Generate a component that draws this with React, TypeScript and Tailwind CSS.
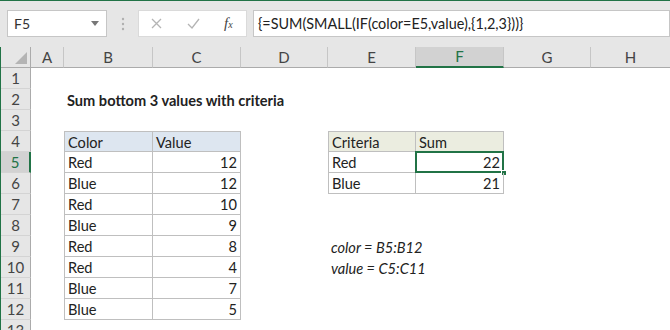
import React from "react";

type Cell = {
  text?: string;
  right?: boolean;
  bold?: boolean;
  italic?: boolean;
  cls?: string;
  selected?: boolean;
};

const t1 = "border-r border-b border-[#bfbfbf]";
const blueHdr = "bg-[#dde6f0]";
const greenHdr = "bg-[#ebede0]";

// row number -> cells keyed by column letter
const sheet: Record<number, Record<string, Cell>> = {
  2: { B: { text: "Sum bottom 3 values with criteria", bold: true } },
  4: {
    B: { text: "Color", cls: `${t1} border-l border-t ${blueHdr}` },
    C: { text: "Value", cls: `${t1} border-t ${blueHdr}` },
    E: { text: "Criteria", cls: `${t1} border-l border-t ${greenHdr}` },
    F: { text: "Sum", cls: `${t1} border-t ${greenHdr}` },
  },
  5: {
    E: { text: "Red", cls: `${t1} border-l` },
    F: { text: "22", right: true, cls: t1, selected: true },
  },
  6: {
    E: { text: "Blue", cls: `${t1} border-l` },
    F: { text: "21", right: true, cls: t1 },
  },
  9: { E: { text: "color = B5:B12", italic: true } },
  10: { E: { text: "value = C5:C11", italic: true } },
};

const data: [string, string][] = [
  ["Red", "12"],
  ["Blue", "12"],
  ["Red", "10"],
  ["Blue", "9"],
  ["Red", "8"],
  ["Red", "4"],
  ["Blue", "7"],
  ["Blue", "5"],
];
data.forEach(([c, v], i) => {
  const r = i + 5;
  sheet[r] = sheet[r] || {};
  sheet[r].B = { text: c, cls: `${t1} border-l` };
  sheet[r].C = { text: v, right: true, cls: t1 };
});

const columns = ["A", "B", "C", "D", "E", "F", "G", "H"];
const rows = Array.from({ length: 13 }, (_, i) => i + 1);

const App: React.FC = () => {
  return (
    <div className="w-[670px] h-[330px] overflow-hidden bg-white font-['Lato',sans-serif] text-[#222]">
      {/* Formula bar */}
      <div className="h-[47px] bg-[#e6e6e6] border-t border-[#217346] flex items-start pt-[9px]">
        <div className="ml-[7px] w-[100px] h-[27px] bg-white border border-[#c6c6c6] flex items-center justify-between pl-[6px] pr-[7px] text-[14px] text-[#333]">
          <span>F5</span>
          <svg width="8" height="5" viewBox="0 0 8 5">
            <path d="M0 0 L8 0 L4 5 Z" fill="#777" />
          </svg>
        </div>
        <div className="w-[31px] h-[27px] flex items-center justify-center">
          <svg width="4" height="14" viewBox="0 0 4 14">
            <circle cx="2" cy="2" r="1.2" fill="#b0b0b0" />
            <circle cx="2" cy="7" r="1.2" fill="#b0b0b0" />
            <circle cx="2" cy="12" r="1.2" fill="#b0b0b0" />
          </svg>
        </div>
        <div className="w-[109px] h-[27px] bg-white border border-[#dadada] flex items-center">
          <svg className="ml-[12px]" width="11" height="11" viewBox="0 0 11 11">
            <path d="M1 1 L10 10 M10 1 L1 10" stroke="#b4b4b4" strokeWidth="1.3" />
          </svg>
          <svg className="ml-[25px]" width="13" height="11" viewBox="0 0 13 11">
            <path d="M1 6 L5 10 L12 1" stroke="#b4b4b4" strokeWidth="1.3" fill="none" />
          </svg>
          <span className="ml-[24px] font-['Liberation_Serif',serif] italic text-[15px] text-[#444] leading-none">
            f<span className="text-[10px]">x</span>
          </span>
        </div>
        <div className="ml-[6px] flex-1 h-[27px] bg-white border border-[#c6c6c6] flex items-center pl-[4px] text-[14.4px] text-[#222] whitespace-nowrap">
          {"{=SUM(SMALL(IF(color=E5,value),{1,2,3}))}"}
        </div>
      </div>

      {/* Sheet grid */}
      <div className="grid grid-cols-[30px_33px_89px_88px_87px_88px_88px_87px_80px] auto-rows-[21px] border-l border-[#217346]">
        {/* corner */}
        <div className="bg-[#e6e6e6] border-r border-b border-[#ababab] flex items-end justify-end pr-[3px] pb-[3px]">
          <svg width="12" height="12" viewBox="0 0 12 12">
            <path d="M12 0 L12 12 L0 12 Z" fill="#b4b4b4" />
          </svg>
        </div>
        {columns.map((c) => (
          <div
            key={c}
            className={
              c === "F"
                ? "bg-[#d2d2d2] border-r border-[#c6c6c6] border-b-2 border-b-[#217346] flex items-center justify-center text-[15px] text-[#217346]"
                : "bg-[#e6e6e6] border-r border-[#c6c6c6] border-b border-b-[#ababab] flex items-center justify-center text-[15px] text-[#444]"
            }
          >
            {c}
          </div>
        ))}

        {rows.map((r) => (
          <React.Fragment key={r}>
            <div
              className={
                r === 5
                  ? "bg-[#d2d2d2] border-r-2 border-[#217346] border-b border-b-[#d4d4d4] flex items-center justify-center text-[15px] text-[#217346]"
                  : "bg-[#e6e6e6] border-r border-[#ababab] border-b border-b-[#d4d4d4] flex items-center justify-center text-[15px] text-[#444]"
              }
            >
              {r}
            </div>
            {columns.map((c) => {
              const cell = sheet[r]?.[c];
              if (!cell) return <div key={c} />;
              return (
                <div
                  key={c}
                  className={`relative flex items-center px-[3px] pt-[2px] text-[14.6px] whitespace-nowrap ${
                    cell.right ? "justify-end" : "justify-start"
                  } ${cell.bold ? "font-bold" : ""} ${cell.italic ? "italic" : ""} ${cell.cls ?? ""}`}
                >
                  {cell.text}
                  {cell.selected && (
                    <>
                      <div className="absolute -left-px -top-px -right-px -bottom-px border-2 border-[#217346]" />
                      <div className="absolute -right-[4px] -bottom-[4px] w-[6px] h-[6px] bg-[#217346] border border-white" />
                    </>
                  )}
                </div>
              );
            })}
          </React.Fragment>
        ))}
      </div>
    </div>
  );
};

export default App;
